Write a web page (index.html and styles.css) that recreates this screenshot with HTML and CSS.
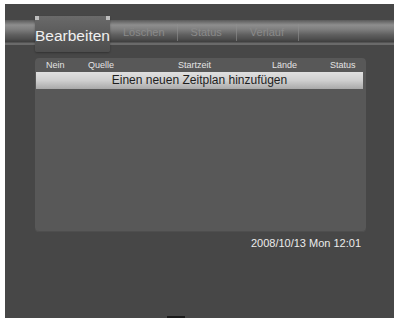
FILE: index.html
```html
<!DOCTYPE html>
<html lang="de">
<head>
    <meta charset="UTF-8">
    <title>Timer</title>
    <link rel="stylesheet" href="styles.css">
</head>
<body>
    <div class="screen">
        <div class="tabbar">
            <div class="tab active">Bearbeiten</div>
            <div class="tab">Löschen</div>
            <div class="sep"></div>
            <div class="tab">Status</div>
            <div class="sep"></div>
            <div class="tab">Verlauf</div>
            <div class="sep"></div>
        </div>

        <div class="panel">
            <div class="head">
                <span>Nein</span>
                <span>Quelle</span>
                <span>Startzeit</span>
                <span>Lände</span>
                <span>Status</span>
            </div>
            <div class="row selected">Einen neuen Zeitplan hinzufügen</div>
        </div>

        <div class="clock">2008/10/13 Mon 12:01</div>
        <div class="notch"></div>
    </div>
</body>
</html>
```
FILE: styles.css
```css
body {
    margin: 0;
    background: #fff;
    font-family: "Liberation Sans", Arial, sans-serif;
}
.screen {
    margin: 4px 0 0 5px;
    width: 389px;
    height: 314px;
    background: #474747;
    padding-top: 16px;
    box-sizing: border-box;
    position: relative;
}
.tabbar {
    height: 25px;
    display: flex;
    align-items: center;
    background: linear-gradient(to bottom, #5a5a5a 0px, #8e8e8e 5px, #808080 9px, #5e5e5e 15px, #4e4e4e 19px, #3e3e3e 22px, #6a6a6a 23px, #6a6a6a 25px);
}
.tab {
    font-size: 11px;
    color: #8a8a8a;
    padding: 0 12px;
    line-height: 25px;
}
.tab.active {
    position: relative;
    margin: -4px 0 0 30px;
    height: 36px;
    width: 75px;
    padding: 0;
    box-sizing: border-box;
    align-self: flex-start;
    font-size: 15.5px;
    color: #f0f0f0;
    line-height: 40px;
    text-align: center;
    background: linear-gradient(to bottom, #6a6a6a 0%, #5c5c5c 45%, #4e4e4e 100%);
    border-radius: 2px;
    box-shadow: 0 1px 2px rgba(0, 0, 0, 0.3);
}
.tab.active::before,
.tab.active::after {
    content: "";
    position: absolute;
    top: 0;
    width: 4px;
    height: 4px;
    background: #bdbdbd;
}
.tab.active::before { left: 0; }
.tab.active::after { right: 0; }
.tab:nth-child(2) { padding: 0 12px 0 13px; }
.sep {
    width: 1px;
    height: 17px;
    background: #8f8f8f;
    opacity: 0.6;
}
.sep + .tab { padding: 0 14px 0 13px; }
.panel {
    margin: 13px 0 0 30px;
    width: 331px;
    height: 174px;
    background: #585858;
    border-radius: 4px;
    box-shadow: inset 0 -1px 0 #4e4e4e;
    overflow: hidden;
}
.head {
    display: grid;
    grid-template-columns: 42px 90px 94px 58px auto;
    padding: 2px 0 0 11px;
    height: 11px;
    font-size: 9px;
    line-height: 11px;
    color: #e4e4e4;
}
.row.selected {
    margin: 1px 3px 0 1px;
    height: 17px;
    line-height: 17px;
    font-size: 12px;
    text-align: center;
    color: #1e1e1e;
    background: linear-gradient(to bottom, #e0e0e0 0%, #cfcfcf 50%, #a9a9a9 100%);
}
.clock {
    margin: 5px 0 0 0;
    width: 356px;
    text-align: right;
    font-size: 11px;
    color: #ececec;
}
.notch {
    position: absolute;
    left: 162px;
    bottom: 0;
    width: 18px;
    height: 2px;
    background: #1a1a1a;
}
```
